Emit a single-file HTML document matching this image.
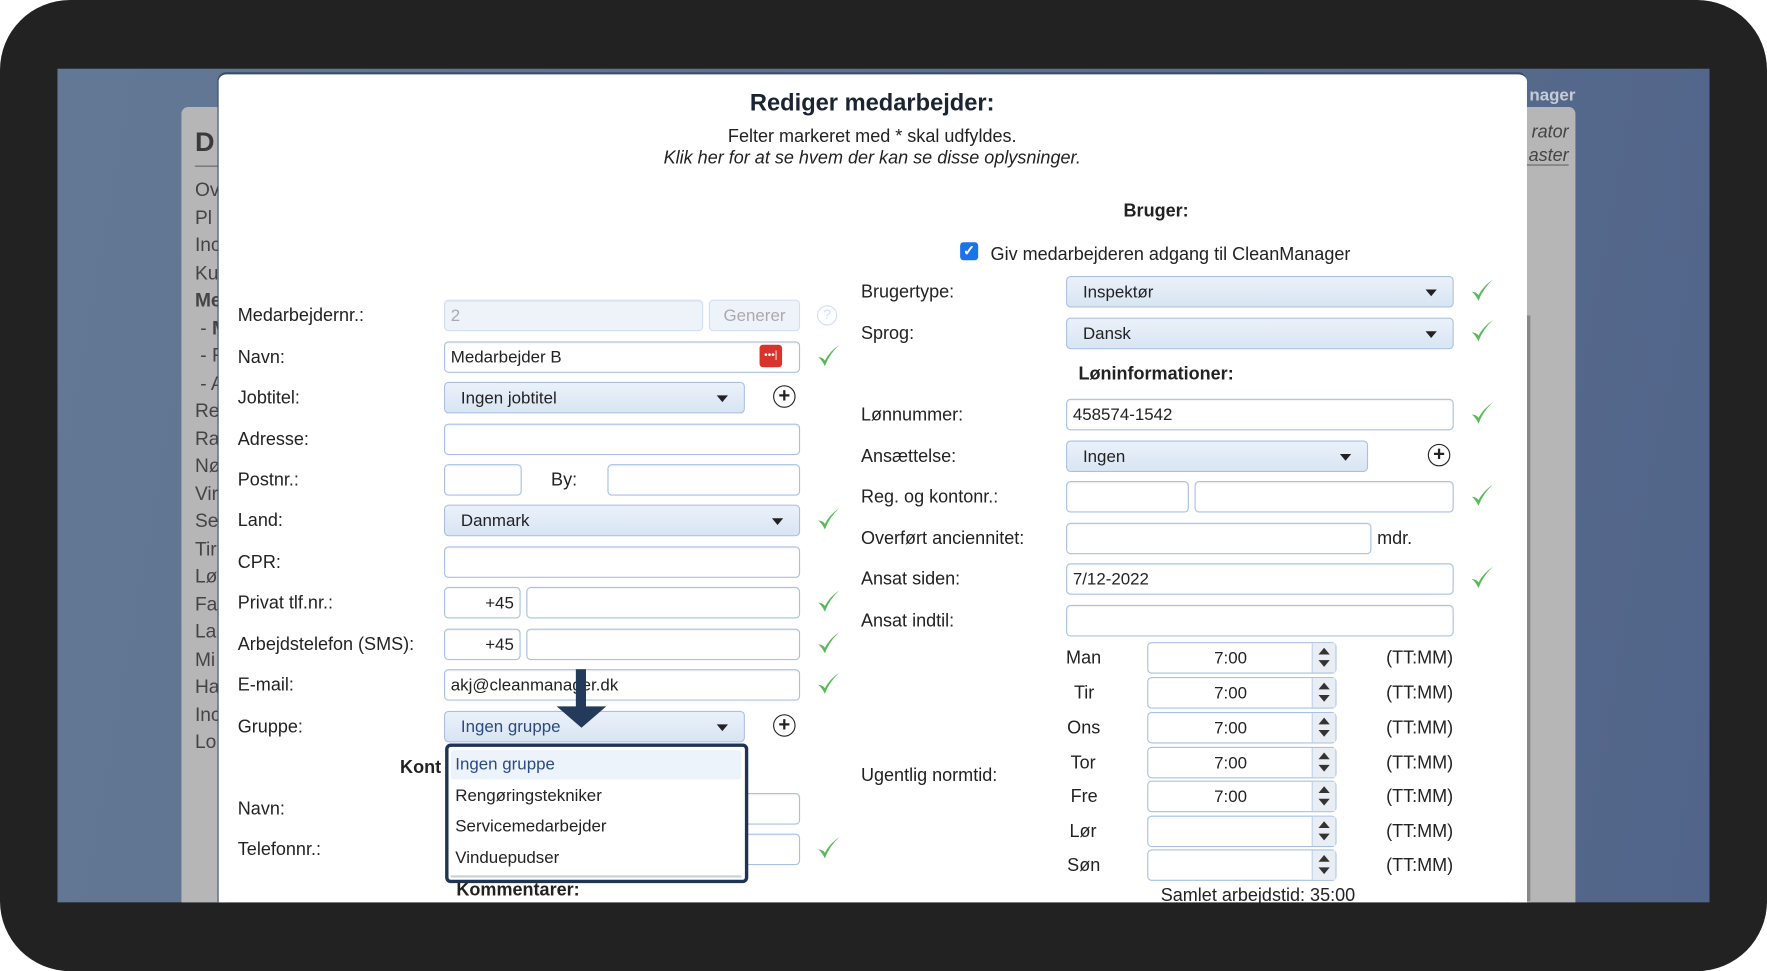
<!DOCTYPE html>
<html><head><meta charset="utf-8"><style>
*{box-sizing:border-box;margin:0;padding:0}
html,body{width:1767px;height:971px;overflow:hidden;background:#fff}
#w{position:absolute;left:0;top:0;width:1568px;height:862px;transform:scale(1.12691,1.1265);transform-origin:0 0;font-family:"Liberation Sans",Arial,sans-serif;color:#222;font-size:16px}
.a{position:absolute;white-space:nowrap}
.l{position:absolute;white-space:nowrap;transform:translateY(-44%);font-size:16px;color:#222}
.in{position:absolute;height:28px;border:1px solid #a9c0e3;border-radius:4px;background:#fff;font-size:15px;line-height:27px;padding-left:5px;box-shadow:inset 0 1px 1px rgba(0,0,0,.05)}
.sel{position:absolute;height:28px;border:1px solid #a9c0e3;border-radius:4px;background:linear-gradient(#eaf1fa,#d9e5f3);font-size:15px;line-height:27px;padding-left:14px}
.sel:after{content:"";position:absolute;right:14px;top:11px;border-left:5px solid transparent;border-right:5px solid transparent;border-top:6px solid #222}
.ck{position:absolute;width:22px;height:22px}
.pl{position:absolute;width:20px;height:20px;border:1.6px solid #222;border-radius:50%;text-align:center;font-size:18px;line-height:16px;font-weight:bold}
.sp{position:absolute;width:168px;height:28px;border:1px solid #a9c0e3;border-radius:4px;background:#fff;font-size:15px;line-height:27px;text-align:center;padding-right:20px}
.sp b{position:absolute;right:0;top:0;width:21px;height:26px;border-left:1px solid #c5d3e6;background:#e9eef5}
.sp b:before{content:"";position:absolute;left:5px;top:4px;border-left:5px solid transparent;border-right:5px solid transparent;border-bottom:6px solid #333}
.sp b:after{content:"";position:absolute;left:5px;top:15px;border-left:5px solid transparent;border-right:5px solid transparent;border-top:6px solid #333}
.g{color:#444;font-size:17px}
</style></head><body><div id="w">
<div class="a" style="left:0;top:0;width:1568px;height:862px;background:#222;border-radius:62px"></div>
<div class="a" style="left:51px;top:61px;width:1466px;height:740px;background:linear-gradient(100deg,#627894 0%,#5a6f8d 60%,#51648a 100%)"></div>
<div class="a" style="left:161px;top:95px;width:40px;height:706px;background:#b6b6b6;border-radius:6px 0 0 0"></div>
<div class="a g" style="left:173px;top:113px;font-size:24px;font-weight:bold;color:#3a3a3a">D</div>
<div class="a" style="left:173px;top:147px;width:22px;height:1px;background:#666"></div>
<div class="a g" style="left:173px;top:157px;line-height:24.5px">Ov<br>Pl<br>Inc<br>Ku<br><b>Me</b><br>&nbsp;- <b>M</b><br>&nbsp;- F<br>&nbsp;- A<br>Re<br>Ra<br>Nø<br>Vir<br>Se<br>Tir<br>Lø<br>Fa<br>La<br>Mi<br>Ha<br>Inc<br>Lo</div>
<div class="a" style="left:1300px;width:98px;text-align:right;top:76px;font-weight:bold;color:#c8ccd4;font-size:15px">nager</div>
<div class="a" style="left:1340px;top:95px;width:58px;height:706px;background:#b6b6b6;border-radius:0 6px 0 0"></div>
<div class="a" style="left:1290px;width:102px;text-align:right;top:107px;font-style:italic;color:#444;font-size:16px;line-height:21px">rator<br>aster</div>
<div class="a" style="left:1355px;top:146px;width:37px;height:1px;background:#666"></div>
<div class="a" style="left:1355px;top:280px;width:3px;height:520px;background:#888"></div>
<div class="a" style="left:193px;top:64px;width:1162px;height:737px;background:#fff;border-radius:8px 8px 0 0;border-top:2px solid #3b4c66;border-left:1px solid #3b4c66"></div>
<div class="a" style="left:193px;top:80px;width:1162px;text-align:center;font-weight:bold;font-size:21px;color:#1b2433">Rediger medarbejder:</div>
<div class="a" style="left:193px;top:113px;width:1162px;text-align:center">Felter markeret med * skal udfyldes.</div>
<div class="a" style="left:193px;top:132px;width:1162px;text-align:center;font-style:italic">Klik her for at se hvem der kan se disse oplysninger.</div>
<div class="a" style="left:997px;top:179px;font-weight:bold">Bruger:</div>
<div class="a" style="left:852px;top:215px;width:16px;height:16px;background:#1a73e8;border-radius:3px;color:#fff;font-size:13px;line-height:16px;text-align:center;font-weight:bold">✓</div>
<div class="a" style="left:879px;top:218px">Giv medarbejderen adgang til CleanManager</div>

<div class="l" style="left:211px;top:280px">Medarbejdernr.:</div>
<div class="l" style="left:211px;top:317px">Navn:</div>
<div class="l" style="left:211px;top:353px">Jobtitel:</div>
<div class="l" style="left:211px;top:390px">Adresse:</div>
<div class="l" style="left:211px;top:426px">Postnr.:</div>
<div class="l" style="left:489px;top:426px">By:</div>
<div class="l" style="left:211px;top:462px">Land:</div>
<div class="l" style="left:211px;top:499px">CPR:</div>
<div class="l" style="left:211px;top:535px">Privat tlf.nr.:</div>
<div class="l" style="left:211px;top:572px">Arbejdstelefon (SMS):</div>
<div class="l" style="left:211px;top:608px">E-mail:</div>
<div class="l" style="left:211px;top:645px">Gruppe:</div>
<div class="l" style="left:355px;top:681px;font-weight:bold">Kont</div>
<div class="l" style="left:211px;top:718px">Navn:</div>
<div class="l" style="left:211px;top:754px">Telefonnr.:</div>
<div class="l" style="left:405px;top:790px;font-weight:bold">Kommentarer:</div>

<div class="in" style="left:394px;top:266px;width:230px;background:#eef3f9;border-color:#d3dfef;color:#aaa">2</div>
<div class="a" style="left:629px;top:266px;width:81px;height:28px;border:1px solid #d3dfef;border-radius:4px;background:#eef3f9;color:#aaa;text-align:center;line-height:27px;font-size:15px">Generer</div>
<div class="a" style="left:725px;top:271px;width:18px;height:18px;border:1.5px solid #cfe0f5;border-radius:50%;color:#cfe0f5;font-size:12px;text-align:center;line-height:15px">?</div>
<div class="in" style="left:394px;top:303px;width:316px">Medarbejder B</div>
<div class="a" style="left:674px;top:306px;width:20px;height:20px;background:#d9342b;border-radius:3px;color:#fff;font-size:9px;text-align:center;line-height:19px">•••|</div>
<div class="sel" style="left:394px;top:339px;width:267px">Ingen jobtitel</div>
<div class="pl" style="left:686px;top:342px">+</div>
<div class="in" style="left:394px;top:376px;width:316px"></div>
<div class="in" style="left:394px;top:412px;width:69px"></div>
<div class="in" style="left:539px;top:412px;width:171px"></div>
<div class="sel" style="left:394px;top:448px;width:316px">Danmark</div>
<div class="in" style="left:394px;top:485px;width:316px"></div>
<div class="in" style="left:394px;top:521px;width:68px;text-align:right;padding-right:5px">+45</div>
<div class="in" style="left:467px;top:521px;width:243px"></div>
<div class="in" style="left:394px;top:558px;width:68px;text-align:right;padding-right:5px">+45</div>
<div class="in" style="left:467px;top:558px;width:243px"></div>
<div class="in" style="left:394px;top:594px;width:316px">akj@cleanmanager.dk</div>
<div class="sel" style="left:394px;top:631px;width:267px;color:#2b4a80">Ingen gruppe</div>
<div class="pl" style="left:686px;top:634px">+</div>
<div class="in" style="left:600px;top:704px;width:110px"></div>
<div class="in" style="left:600px;top:740px;width:110px"></div>

<div class="a" style="left:395px;top:660px;width:269px;height:124px;border:3px solid #1f3352;border-radius:5px;background:#fff;font-size:15px">
<div class="a" style="left:2px;top:3px;width:258px;height:26px;background:#edf3fb;border-radius:3px"></div>
<div class="a" style="left:6px;top:7px;color:#2b4a80">Ingen gruppe</div>
<div class="a" style="left:6px;top:35px">Rengøringstekniker</div>
<div class="a" style="left:6px;top:62px">Servicemedarbejder</div>
<div class="a" style="left:6px;top:90px">Vinduepudser</div>
<div class="a" style="left:2px;top:114px;width:258px;height:2px;background:#c9d3e0"></div>
</div>
<svg class="a" style="left:490px;top:594px" width="52" height="54" viewBox="0 0 52 54"><rect x="21" y="0" width="9" height="34" fill="#243a5a"/><path d="M4 33 L48 33 L26 52 Z" fill="#243a5a"/></svg>

<div class="l" style="left:764px;top:259px">Brugertype:</div>
<div class="l" style="left:764px;top:296px">Sprog:</div>
<div class="a" style="left:957px;top:324px;font-weight:bold">Løninformationer:</div>
<div class="l" style="left:764px;top:368px">Lønnummer:</div>
<div class="l" style="left:764px;top:405px">Ansættelse:</div>
<div class="l" style="left:764px;top:441px">Reg. og kontonr.:</div>
<div class="l" style="left:764px;top:478px">Overført anciennitet:</div>
<div class="l" style="left:764px;top:514px">Ansat siden:</div>
<div class="l" style="left:764px;top:551px">Ansat indtil:</div>
<div class="l" style="left:764px;top:688px">Ugentlig normtid:</div>
<div class="sel" style="left:946px;top:245px;width:344px">Inspektør</div>
<div class="sel" style="left:946px;top:282px;width:344px">Dansk</div>
<div class="in" style="left:946px;top:354px;width:344px">458574-1542</div>
<div class="sel" style="left:946px;top:391px;width:268px">Ingen</div>
<div class="pl" style="left:1267px;top:394px">+</div>
<div class="in" style="left:946px;top:427px;width:109px"></div>
<div class="in" style="left:1060px;top:427px;width:230px"></div>
<div class="in" style="left:946px;top:464px;width:271px"></div>
<div class="l" style="left:1222px;top:478px">mdr.</div>
<div class="in" style="left:946px;top:500px;width:344px">7/12-2022</div>
<div class="in" style="left:946px;top:537px;width:344px"></div>

<div class="l" style="left:946px;top:584px">Man</div><div class="sp" style="left:1018px;top:570px">7:00<b></b></div><div class="l" style="left:1230px;top:584px">(TT:MM)</div>
<div class="l" style="left:953px;top:615px">Tir</div><div class="sp" style="left:1018px;top:601px">7:00<b></b></div><div class="l" style="left:1230px;top:615px">(TT:MM)</div>
<div class="l" style="left:947px;top:646px">Ons</div><div class="sp" style="left:1018px;top:632px">7:00<b></b></div><div class="l" style="left:1230px;top:646px">(TT:MM)</div>
<div class="l" style="left:950px;top:677px">Tor</div><div class="sp" style="left:1018px;top:663px">7:00<b></b></div><div class="l" style="left:1230px;top:677px">(TT:MM)</div>
<div class="l" style="left:950px;top:707px">Fre</div><div class="sp" style="left:1018px;top:693px">7:00<b></b></div><div class="l" style="left:1230px;top:707px">(TT:MM)</div>
<div class="l" style="left:949px;top:738px">Lør</div><div class="sp" style="left:1018px;top:724px"><b></b></div><div class="l" style="left:1230px;top:738px">(TT:MM)</div>
<div class="l" style="left:947px;top:768px">Søn</div><div class="sp" style="left:1018px;top:754px"><b></b></div><div class="l" style="left:1230px;top:768px">(TT:MM)</div>
<div class="a" style="left:1030px;top:787px">Samlet arbejdstid: 35:00</div>

<svg width="0" height="0" style="position:absolute"><defs><symbol id="c" viewBox="0 0 22 22"><path d="M2 12 Q5 14 8 20 Q12 9 21 1 Q12 7 8 15 Q6 12 2 12Z" fill="#5cb85c"/></symbol></defs></svg>
<svg class="ck" style="left:724px;top:305px"><use href="#c"/></svg>
<svg class="ck" style="left:724px;top:450px"><use href="#c"/></svg>
<svg class="ck" style="left:724px;top:523px"><use href="#c"/></svg>
<svg class="ck" style="left:724px;top:560px"><use href="#c"/></svg>
<svg class="ck" style="left:724px;top:596px"><use href="#c"/></svg>
<svg class="ck" style="left:724px;top:742px"><use href="#c"/></svg>
<svg class="ck" style="left:1304px;top:247px"><use href="#c"/></svg>
<svg class="ck" style="left:1304px;top:283px"><use href="#c"/></svg>
<svg class="ck" style="left:1304px;top:356px"><use href="#c"/></svg>
<svg class="ck" style="left:1304px;top:429px"><use href="#c"/></svg>
<svg class="ck" style="left:1304px;top:502px"><use href="#c"/></svg>
</div></body></html>
